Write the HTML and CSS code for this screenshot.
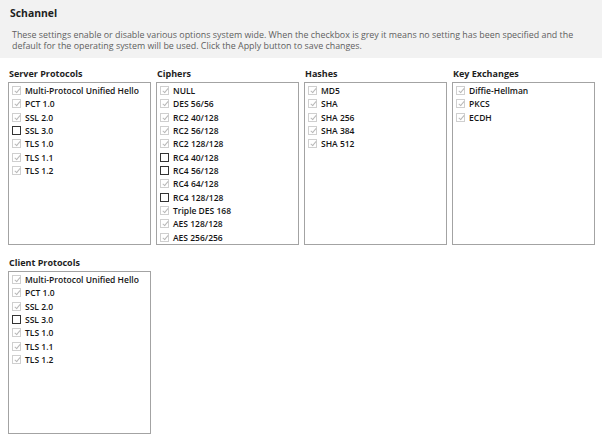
FILE: index.html
```html
<!DOCTYPE html>
<html lang="en">
<head>
<meta charset="utf-8">
<title>Schannel</title>
<link rel="stylesheet" href="styles.css">
</head>
<body>
<header class="header">
  <h1 class="title">Schannel</h1>
  <p class="desc">These settings enable or disable various options system wide. When the checkbox is grey it means no setting has been specified and the default for the operating system will be used. Click the Apply button to save changes.</p>
</header>
<main class="main">
  <div class="grid">
    <section class="group">
      <h2 class="label">Server Protocols</h2>
      <ul class="list">
        <li class="item"><span class="cb grey"></span>Multi-Protocol Unified Hello</li>
        <li class="item"><span class="cb grey"></span>PCT 1.0</li>
        <li class="item"><span class="cb grey"></span>SSL 2.0</li>
        <li class="item"><span class="cb off"></span>SSL 3.0</li>
        <li class="item"><span class="cb grey"></span>TLS 1.0</li>
        <li class="item"><span class="cb grey"></span>TLS 1.1</li>
        <li class="item"><span class="cb grey"></span>TLS 1.2</li>
      </ul>
    </section>
    <section class="group">
      <h2 class="label">Ciphers</h2>
      <ul class="list">
        <li class="item"><span class="cb grey"></span>NULL</li>
        <li class="item"><span class="cb grey"></span>DES 56/56</li>
        <li class="item"><span class="cb grey"></span>RC2 40/128</li>
        <li class="item"><span class="cb grey"></span>RC2 56/128</li>
        <li class="item"><span class="cb grey"></span>RC2 128/128</li>
        <li class="item"><span class="cb off"></span>RC4 40/128</li>
        <li class="item"><span class="cb off"></span>RC4 56/128</li>
        <li class="item"><span class="cb grey"></span>RC4 64/128</li>
        <li class="item"><span class="cb off"></span>RC4 128/128</li>
        <li class="item"><span class="cb grey"></span>Triple DES 168</li>
        <li class="item"><span class="cb grey"></span>AES 128/128</li>
        <li class="item"><span class="cb grey"></span>AES 256/256</li>
      </ul>
    </section>
    <section class="group">
      <h2 class="label">Hashes</h2>
      <ul class="list">
        <li class="item"><span class="cb grey"></span>MD5</li>
        <li class="item"><span class="cb grey"></span>SHA</li>
        <li class="item"><span class="cb grey"></span>SHA 256</li>
        <li class="item"><span class="cb grey"></span>SHA 384</li>
        <li class="item"><span class="cb grey"></span>SHA 512</li>
      </ul>
    </section>
    <section class="group">
      <h2 class="label">Key Exchanges</h2>
      <ul class="list">
        <li class="item"><span class="cb grey"></span>Diffie-Hellman</li>
        <li class="item"><span class="cb grey"></span>PKCS</li>
        <li class="item"><span class="cb grey"></span>ECDH</li>
      </ul>
    </section>
    <section class="group row2">
      <h2 class="label">Client Protocols</h2>
      <ul class="list">
        <li class="item"><span class="cb grey"></span>Multi-Protocol Unified Hello</li>
        <li class="item"><span class="cb grey"></span>PCT 1.0</li>
        <li class="item"><span class="cb grey"></span>SSL 2.0</li>
        <li class="item"><span class="cb off"></span>SSL 3.0</li>
        <li class="item"><span class="cb grey"></span>TLS 1.0</li>
        <li class="item"><span class="cb grey"></span>TLS 1.1</li>
        <li class="item"><span class="cb grey"></span>TLS 1.2</li>
      </ul>
    </section>
  </div>
</main>
</body>
</html>
```

FILE: styles.css
```css
html, body {
  margin: 0;
  padding: 0;
  background: #ffffff;
}

body {
  font-family: "Open Sans", "Noto Sans", "Liberation Sans", sans-serif;
  color: #1a1a1a;
}

.header {
  background: #f2f2f2;
  height: 58px;
  box-sizing: border-box;
  padding: 5px 10px 0 10px;
}

.title {
  margin: 0;
  font-size: 10.4px;
  font-weight: 700;
  line-height: 16px;
  color: #1e1e1e;
}

.desc {
  margin: 8px 0 0 2px;
  font-size: 8.9px;
  line-height: 11px;
  color: #5f5f5f;
}

.main {
  padding: 9px 7px 0 8px;
}

.grid {
  display: grid;
  grid-template-columns: repeat(4, 143px);
  column-gap: 5px;
  row-gap: 11px;
}

.label {
  margin: 0 0 1px 1px;
  font-size: 9px;
  font-weight: 700;
  line-height: 14px;
  color: #1e1e1e;
}

.list {
  list-style: none;
  margin: 0;
  padding: 0 2px 0 3px;
  height: 163px;
  box-sizing: border-box;
  border: 1px solid #a3a3a3;
}

.item {
  display: flex;
  align-items: center;
  gap: 4px;
  height: 13.33px;
  font-size: 8.5px;
  font-weight: 600;
  color: #151515;
  white-space: nowrap;
}

.item:first-child {
  margin-top: 1px;
}

.cb {
  position: relative;
  flex: none;
  width: 9px;
  height: 9px;
  box-sizing: border-box;
  background: #ffffff;
}

.cb.grey {
  border: 1px solid #cfcfcf;
}

.cb.grey::after {
  content: "";
  position: absolute;
  left: 2.5px;
  top: 0px;
  width: 2px;
  height: 5px;
  border: solid #b9b9b9;
  border-width: 0 1px 1px 0;
  transform: rotate(40deg);
}

.cb.off {
  border: 1px solid #333333;
}
```
